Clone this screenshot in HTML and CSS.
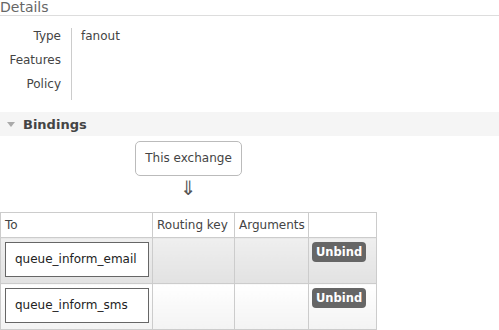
FILE: index.html
```html
<!DOCTYPE html>
<html>
<head>
  <title>Exchange: fanout</title>
  <link rel="stylesheet" href="styles.css">
</head>
<body>
  <h2 class="section-title">Details</h2>

  <table class="facts">
    <tr>
      <th>Type</th>
      <td>fanout</td>
    </tr>
    <tr>
      <th>Features</th>
      <td></td>
    </tr>
    <tr>
      <th>Policy</th>
      <td></td>
    </tr>
  </table>

  <div class="section-bar">
    <span class="toggle"></span>
    <span class="section-name">Bindings</span>
  </div>

  <div class="bindings">
    <div class="source">
      <span class="exchange-box">This exchange</span>
      <div class="arrow">&#8659;</div>
    </div>

    <table class="list">
      <colgroup>
        <col class="c-to">
        <col class="c-key">
        <col class="c-args">
        <col class="c-act">
      </colgroup>
      <thead>
        <tr>
          <th>To</th>
          <th>Routing key</th>
          <th>Arguments</th>
          <th></th>
        </tr>
      </thead>
      <tbody>
        <tr class="alt1">
          <td><span class="queue-link">queue_inform_email</span></td>
          <td></td>
          <td></td>
          <td><button class="unbind">Unbind</button></td>
        </tr>
        <tr class="alt2">
          <td><span class="queue-link">queue_inform_sms</span></td>
          <td></td>
          <td></td>
          <td><button class="unbind">Unbind</button></td>
        </tr>
      </tbody>
    </table>
  </div>
</body>
</html>
```

FILE: styles.css
```css
body {
    margin: 0;
    font-family: "DejaVu Sans", Verdana, sans-serif;
    font-size: 12px;
    color: #444;
    background: #fff;
}

.section-title {
    margin: 0;
    padding: 0 0 1px 0;
    font-size: 14px;
    font-weight: normal;
    line-height: 14px;
    color: #666;
    border-bottom: 1px solid #ddd;
}

.facts {
    border-collapse: collapse;
    margin-top: 12px;
}

.facts th, .facts td {
    padding: 0 0 8px 0;
    line-height: 16px;
    vertical-align: top;
    font-weight: normal;
}

.facts th {
    width: 61px;
    padding-right: 10px;
    text-align: right;
    border-right: 1px solid #ccc;
}

.facts td {
    padding-left: 9px;
}

.section-bar {
    margin-top: 12px;
    height: 24px;
    background: #f5f5f5;
    display: flex;
    align-items: center;
}

.toggle {
    width: 0;
    height: 0;
    margin: 1px 8px 0 7px;
    border-left: 4px solid transparent;
    border-right: 4px solid transparent;
    border-top: 5px solid #aaa;
}

.section-name {
    font-size: 13px;
    font-weight: bold;
    color: #444;
}

.bindings {
    display: inline-block;
}

.source {
    text-align: center;
    padding-top: 5px;
}

.exchange-box {
    display: inline-block;
    padding: 9px;
    line-height: 15px;
    border: 1px solid #bbb;
    border-radius: 5px;
}

.arrow {
    font-size: 20px;
    line-height: 24px;
    height: 36px;
    color: #555;
}

.list {
    border-collapse: collapse;
    table-layout: fixed;
    width: 376px;
}

.c-to { width: 152px; }
.c-key { width: 82px; }
.c-args { width: 74px; }
.c-act { width: 68px; }

.list th, .list td {
    border: 1px solid #ccc;
    text-align: left;
    vertical-align: top;
    font-weight: normal;
}

.list th {
    padding: 4px;
    line-height: 16px;
}

.list td {
    padding: 4px 3px 6px 4px;
}

.alt1 td {
    background: linear-gradient(#efefef, #e2e2e2);
}

.alt2 td {
    background: linear-gradient(#fff, #f3f3f3);
}

.queue-link {
    display: block;
    box-sizing: border-box;
    width: 144px;
    height: 35px;
    padding: 0 9px;
    line-height: 33px;
    border: 1px solid #666;
    background: #fff;
    color: #222;
}

.unbind {
    display: block;
    margin-left: -1px;
    padding: 0 4px;
    height: 20px;
    border: 0;
    border-radius: 4px;
    background: #666;
    color: #fff;
    font-family: "DejaVu Sans", Verdana, sans-serif;
    font-size: 11.5px;
    font-weight: bold;
    line-height: 20px;
}
```
